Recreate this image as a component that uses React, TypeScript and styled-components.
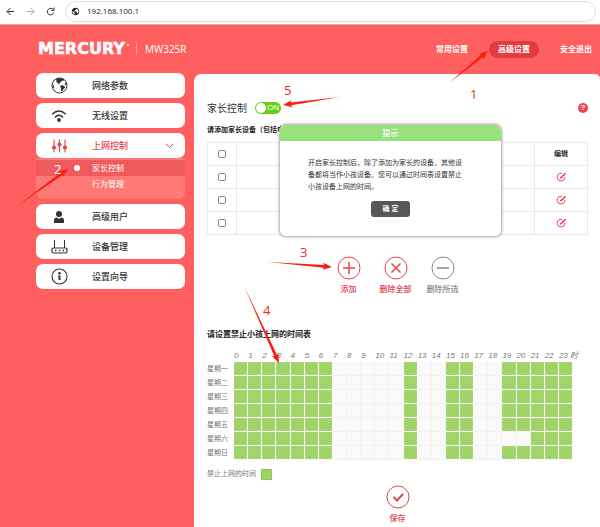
import React, { useState } from "react";
import styled, { createGlobalStyle } from "styled-components";
import { MdPublic } from "react-icons/md";

const RED = "#ff605f";
const ACCENT = "#e2444c";
const GREEN = "#a0d468";

const GlobalStyle = createGlobalStyle`
  * { box-sizing: border-box; }
  body {
    margin: 0;
    background: ${RED};
    color: #333;
    font: 8px/12px "Noto Sans", "Noto Sans CJK SC", sans-serif;
  }
  button { font: inherit; color: inherit; background: none; border: 0; padding: 0; cursor: pointer; }
  a { color: inherit; text-decoration: none; }
  h1, h2, p, ul { margin: 0; padding: 0; font-weight: 400; }
  ul { list-style: none; }
  svg { display: block; flex: none; }
`;

const Page = styled.div`
  position: relative;
  min-height: 100vh;
  overflow: hidden;
  display: flex;
  flex-direction: column;
`;

const BrowserBar = styled.div`
  display: flex;
  align-items: center;
  height: 25px;
  padding: 1px 4px 3px 0;
  background: #fff;
  border-bottom: 1px solid #e2a9a9;
`;

const BrowserButton = styled.button<{ $dim?: boolean }>`
  width: 20px;
  display: flex;
  justify-content: center;
  && { color: ${(p) => (p.$dim ? "#aaa" : "#333")}; }
`;

const AddressBox = styled.label`
  flex: 1;
  display: flex;
  align-items: center;
  gap: 7px;
  height: 21px;
  margin-left: 5px;
  padding: 0 5px;
  border: 1px solid #dcdfe2;
  border-radius: 11px;
  color: #222;
`;

const AddressInput = styled.input`
  flex: 1;
  min-width: 0;
  padding: 0;
  border: 0;
  outline: 0;
  background: none;
  color: #222;
  font: 8px/14px "Open Sans", sans-serif;
`;

const Header = styled.header`
  display: flex;
  align-items: center;
  justify-content: space-between;
  height: 48px;
  padding: 0 8px 0 38px;
  color: #fff;
`;

const Brand = styled.div`
  display: flex;
  align-items: center;
`;

const Logo = styled.span`
  font: bold 16px/20px "DejaVu Sans", sans-serif;
  -webkit-text-stroke: 0.5px #fff;
`;

const LogoDot = styled.span`
  width: 2px;
  height: 2px;
  margin: 0 7px 8px 2px;
  border-radius: 50%;
  background: #fff;
`;

const Model = styled.span`
  padding-left: 8px;
  border-left: 1px solid #ffa09f;
  font: 10px/12px "Open Sans", sans-serif;
`;

const TopNav = styled.nav`
  display: flex;
  align-items: center;
  gap: 21px;
`;

const TopLink = styled.a<{ $active?: boolean }>`
  padding: 2px ${(p) => (p.$active ? "9px" : "0")} 3px;
  border-radius: 9px;
  background: ${(p) => (p.$active ? "#e23c40" : "none")};
  font-weight: 700;
`;

const Body = styled.div`
  flex: 1;
  display: flex;
  align-items: stretch;
  gap: 9px;
  padding-left: 36px;
`;

const Sidebar = styled.nav`
  width: 149px;
  flex: none;
  display: flex;
  flex-direction: column;
  gap: 5px;
`;

const MenuButton = styled.button<{ $active?: boolean }>`
  display: grid;
  grid-template-columns: 46px 1fr 32px;
  align-items: center;
  justify-items: start;
  width: 100%;
  height: 25px;
  border-radius: 7px;
  && {
    background: #fff;
    color: ${(p) => (p.$active ? ACCENT : "#333")};
  }
  font-size: 9px;
  line-height: 12px;
  font-weight: 500;
  svg { justify-self: center; }
`;

const MenuLabel = styled.span`
  padding-left: 10px;
`;

const SubMenu = styled.ul`
  padding: 2px 0 7px;
  border-radius: 0 0 7px 7px;
  background: #ff7977;
  color: #fff;
`;

const SubLink = styled.a<{ $active?: boolean }>`
  display: grid;
  grid-template-columns: 56px 1fr;
  align-items: center;
  height: 16px;
  background: ${(p) => (p.$active ? "#ef5b5c" : "none")};
  &::before {
    content: "";
    justify-self: end;
    width: 6px;
    height: 6px;
    margin-right: 12px;
    border-radius: 50%;
    background: ${(p) => (p.$active ? "#fff" : "none")};
  }
`;

const Panel = styled.main`
  flex: 1;
  min-width: 0;
  margin-top: 1px;
  padding: 26px 12px 0 13px;
  border-radius: 7px 5px 0 0;
  background: #fff;
`;

const TitleRow = styled.div`
  display: flex;
  align-items: center;
  gap: 8px;
  height: 16px;
`;

const Title = styled.h1`
  font-size: 10px;
  line-height: 16px;
`;

const Switch = styled.label`
  display: flex;
  align-items: center;
  gap: 1px;
  width: 26px;
  height: 12px;
  padding: 1px;
  border-radius: 6px;
  background: #67cf18;
  color: #fff;
  font: 8px/10px "Liberation Sans", sans-serif;
  &:has(input:not(:checked)) { background: #bbb; }
`;

const SwitchInput = styled.input`
  appearance: none;
  flex: none;
  width: 10px;
  height: 10px;
  margin: 0;
  border-radius: 50%;
  background: #fff;
`;

const HelpButton = styled.button`
  width: 10px;
  height: 10px;
  margin-left: auto;
  border-radius: 50%;
  && {
    background: #ee4350;
    color: #fff;
    font: bold 8px/10px "Liberation Sans", sans-serif;
  }
`;

const TableArea = styled.div`
  position: relative;
  padding-top: 8px;
`;

const Hint = styled.p`
  height: 18px;
  color: #222;
  font-size: 7px;
  line-height: 11px;
  font-weight: 700;
  white-space: nowrap;
  overflow: hidden;
`;

const DeviceTable = styled.table`
  width: 100%;
  table-layout: fixed;
  border-collapse: collapse;
  th, td {
    height: 23px;
    padding: 0;
    border: 1px solid #e9e9e9;
    border-width: 1px 0;
    text-align: center;
    vertical-align: middle;
    font-size: 7px;
  }
  th:first-child, td:first-child { width: 29px; border-width: 1px; }
  th:last-child, td:last-child { width: 53px; border-width: 1px; }
`;

const Tick = styled.input`
  appearance: none;
  display: block;
  width: 8px;
  height: 8px;
  margin: 0 auto;
  border: 1px solid #888;
  border-radius: 2px;
  background: #fff;
  &:checked { background: ${ACCENT}; }
`;

const EditButton = styled.button`
  display: block;
  && { margin: 0 auto; color: ${ACCENT}; }
`;

const Dialog = styled.section`
  position: absolute;
  top: 8px;
  left: 72px;
  right: 86px;
  padding-bottom: 19px;
  border: 1px solid #c4c4c4;
  border-radius: 7px;
  background: #fff;
  box-shadow: 0 0 3px rgba(0, 0, 0, 0.35);
  text-align: center;
  overflow: hidden;
`;

const DialogTitle = styled.h2`
  background: #98e27d;
  color: #fff;
  font-size: 8px;
  line-height: 16px;
  font-weight: 500;
`;

const DialogText = styled.p`
  padding: 16px 28px 8px;
  color: #333;
  font-size: 7px;
  line-height: 12px;
  text-align: left;
  white-space: nowrap;
`;

const DialogButton = styled.button`
  height: 16px;
  border-radius: 3px;
  && { background: #575757; color: #fff; font-size: 7px; line-height: 12px; font-weight: 700; padding: 0 12px; }
`;

const Actions = styled.div<{ $top: number; $right?: number }>`
  display: flex;
  justify-content: center;
  padding: ${(p) => p.$top}px ${(p) => p.$right ?? 0}px 0 0;
`;

const ActionButton = styled.button<{ $muted?: boolean }>`
  display: flex;
  flex-direction: column;
  align-items: center;
  gap: 3px;
  width: 47px;
  && { color: ${(p) => (p.$muted ? "#888" : ACCENT)}; }
  font-weight: 500;
`;

const SectionTitle = styled.h2`
  padding-top: 33px;
  color: #222;
  font-size: 8px;
  line-height: 12px;
  font-weight: 700;
`;

const Schedule = styled.table`
  width: 366px;
  max-width: 100%;
  margin-top: 9px;
  table-layout: fixed;
  border-collapse: separate;
  border-spacing: 0;
  color: #777;
  th, td { padding: 0; font-weight: 400; text-align: left; white-space: nowrap; }
  th { font-size: 7px; line-height: 12px; }
  thead th { height: 13px; font-style: italic; font-size: 8px; line-height: 12px; font-family: "Liberation Sans", "Noto Sans CJK SC", sans-serif; }
  tr > :first-child { width: 27px; }
`;

const HourCell = styled.button<{ $blocked: boolean }>`
  display: block;
  width: 100%;
  height: 14px;
  && {
    border: solid ${(p) => (p.$blocked ? "#fafdf7" : "#f2f2f2")};
    border-width: 0 1px 1px 0;
    background: ${(p) => (p.$blocked ? GREEN : "#fafafa")};
    box-shadow: ${(p) => (p.$blocked ? "inset 0 0 0 1px #a6d673" : "none")};
  }
`;

const Legend = styled.div`
  display: flex;
  align-items: center;
  gap: 5px;
  padding-top: 8px;
  color: #777;
  font-size: 7px;
`;

const Swatch = styled.span`
  width: 11px;
  height: 11px;
  border: 1px solid #91c65b;
  background: ${GREEN};
`;

const Annotations = styled.svg`
  position: absolute;
  top: 0;
  left: 0;
  pointer-events: none;
  font: 13px "Open Sans", sans-serif;
`;

const GlobeIcon = () => (
  <svg width="17" height="17" viewBox="0 0 17 17" fill="currentColor">
    <circle cx="8.5" cy="8.5" r="7.5" fill="none" stroke="currentColor" />
    <path d="M5 2 8 1.200h3.500l2 1.500-1.300 1.200-1.500-.3-.5 1.500-1.700.8-.4 1.500-1.300-.9-.3-1.300-1.300.3.300-1.500z" />
    <path d="M9.400 8.800l1.800-.8 2.300 1.200.6 1.500-1.600 1.300-.8 1.800-1.200 1-.7-1.800.4-1.700-1-1.200zM14.300 5.200l1.200 1.600-.4 2-1.300-1.500zM1.200 7l1.600 1.500.4 2-.8.9z" />
  </svg>
);

const WifiIcon = () => (
  <svg width="16" height="14" viewBox="0 0 16 14" fill="none" stroke="currentColor" strokeWidth="1.500">
    <path d="M1.200 5.200Q8-1.200 14.800 5.200M4 8.400Q8 4.200 12 8.400" />
    <circle cx="8" cy="11" r="1.900" fill="currentColor" stroke="none" />
  </svg>
);

const SlidersIcon = () => (
  <svg width="15" height="14" viewBox="0 0 15 14" fill="currentColor" stroke="currentColor" strokeWidth="1.100">
    <path d="M2 .500v13M7.500.500v13M13 .500v13" fill="none" />
    <circle cx="2" cy="8.500" r="1.500" /><circle cx="7.500" cy="5.500" r="1.500" /><circle cx="13" cy="8.500" r="1.500" />
  </svg>
);

const UserIcon = () => (
  <svg width="12" height="14" viewBox="0 0 12 14" fill="currentColor">
    <circle cx="6" cy="4" r="3" />
    <path d="M1 13V10.500Q1 8 3.800 7.600L6 9l2.200-1.400Q11 8 11 10.500V13z" />
  </svg>
);

const RouterIcon = () => (
  <svg width="17" height="16" viewBox="0 0 17 16" fill="none" stroke="currentColor">
    <rect x="1" y="9" width="15" height="5" rx="1.500" strokeWidth="1.200" />
    <path d="M3.500 9V1M13.500 9V1" />
    <path d="M4 11.500h1.500M7.800 11.500h1.500M11.500 11.500H13" strokeWidth="1.500" />
  </svg>
);

const InfoIcon = () => (
  <svg width="17" height="17" viewBox="0 0 17 17" fill="currentColor">
    <circle cx="8.500" cy="8.500" r="7.500" fill="none" stroke="currentColor" strokeWidth="1.100" />
    <circle cx="8.500" cy="5.200" r="1.300" />
    <path d="M7 7.500h2.500V12H7.500V8.500H7z" />
  </svg>
);

const ChevronIcon = () => (
  <svg width="9" height="6" viewBox="0 0 9 6" fill="none" stroke="currentColor">
    <path d="M1 1l3.500 3.500L8 1" />
  </svg>
);

const EditIcon = () => (
  <svg width="11" height="10" viewBox="0 0 11 10" fill="none" stroke="currentColor">
    <path d="M6 1.400H4.400A3.800 3.800 0 1 0 8.800 5" />
    <path d="M4.300 6.400L9.600 1.200" strokeWidth="1.500" />
  </svg>
);

const CircleIcon = ({ d, width = 1.5 }: { d: string; width?: number }) => (
  <svg width="24" height="24" viewBox="0 0 24 24" fill="none" stroke="currentColor">
    <circle cx="12" cy="12" r="11" />
    <path d={d} strokeWidth={width} />
  </svg>
);

const NavArrow = ({ d }: { d: string }) => (
  <svg width="9" height="9" viewBox="0 0 9 9" fill="none" stroke="currentColor">
    <path d={d} />
  </svg>
);

type Point = [number, number];

/** A tapered stroke that grows from its tail into a solid arrow head. */
const Arrow = ({ from, to }: { from: Point; to: Point }) => {
  const dx = to[0] - from[0];
  const dy = to[1] - from[1];
  const len = Math.hypot(dx, dy);
  const angle = (Math.atan2(dy, dx) * 180) / Math.PI;
  const neck = len - 8;
  return (
    <path
      fill="#fb1d10"
      transform={`translate(${from[0]} ${from[1]}) rotate(${angle})`}
      d={`M0 0L${neck} -1.500L${neck - 1} -3.500L${len} 0L${neck - 1} 3.500L${neck} 1.500z`}
    />
  );
};

const arrows: { from: Point; to: Point }[] = [
  { from: [449, 83], to: [488, 51] },
  { from: [16, 207], to: [68, 169] },
  { from: [268, 262], to: [332, 267] },
  { from: [244, 286], to: [279, 363] },
  { from: [340, 97], to: [283, 105] },
];

const marks = [
  { n: "1", x: 470, y: 99, fill: "#f02a20" },
  { n: "2", x: 54, y: 174, fill: "#fff" },
  { n: "3", x: 300, y: 257, fill: "#f02a20" },
  { n: "4", x: 263, y: 315, fill: "#f02a20" },
  { n: "5", x: 284, y: 95, fill: "#f02a20" },
];

const hours = Array.from({ length: 24 }, (_, h) => h);
const days = ["一", "二", "三", "四", "五", "六", "日"];
const isBlocked = (day: string, h: number) =>
  h < 7 || h === 12 || h === 15 || h === 16 || h >= (day === "六" ? 21 : 19);

const upperMenu = [
  { label: "网络参数", icon: <GlobeIcon /> },
  { label: "无线设置", icon: <WifiIcon /> },
];
const lowerMenu = [
  { label: "高级用户", icon: <UserIcon /> },
  { label: "设备管理", icon: <RouterIcon /> },
  { label: "设置向导", icon: <InfoIcon /> },
];

type MenuEntry = { label: string; icon: React.ReactNode };
const MenuItem = ({ label, icon }: MenuEntry) => (
  <MenuButton>
    {icon}
    <MenuLabel>{label}</MenuLabel>
  </MenuButton>
);

export default function App() {
  const [blocked, setBlocked] = useState(() => days.map((d) => hours.map((h) => isBlocked(d, h))));
  const toggle = (row: number, col: number) =>
    setBlocked((all) => all.map((r, i) => (i === row ? r.map((v, j) => (j === col ? !v : v)) : r)));

  return (
    <Page>
      <GlobalStyle />
      <BrowserBar>
        <BrowserButton aria-label="后退"><NavArrow d="M8 4.500H1M4.500 1L1 4.500 4.500 8" /></BrowserButton>
        <BrowserButton aria-label="前进" $dim><NavArrow d="M1 4.500h7M4.500 1L8 4.500 4.500 8" /></BrowserButton>
        <BrowserButton aria-label="刷新"><NavArrow d="M7.500 3A3.300 3.300 0 1 0 7.800 5.500M8 .500V3.300H5.200" /></BrowserButton>
        <AddressBox>
          <MdPublic size={9} />
          <AddressInput aria-label="地址" defaultValue="192.168.100.1" />
        </AddressBox>
      </BrowserBar>

      <Header>
        <Brand>
          <Logo>MERCURY</Logo>
          <LogoDot />
          <Model>MW325R</Model>
        </Brand>
        <TopNav>
          <TopLink href="#basic">常用设置</TopLink>
          <TopLink href="#advanced" $active>高级设置</TopLink>
          <TopLink href="#logout">安全退出</TopLink>
        </TopNav>
      </Header>

      <Body>
        <Sidebar>
          {upperMenu.map((m) => <MenuItem key={m.label} {...m} />)}
          <div>
            <MenuButton $active>
              <SlidersIcon />
              <MenuLabel>上网控制</MenuLabel>
              <ChevronIcon />
            </MenuButton>
            <SubMenu>
              <li><SubLink href="#parent" $active>家长控制</SubLink></li>
              <li><SubLink href="#behavior">行为管理</SubLink></li>
            </SubMenu>
          </div>
          {lowerMenu.map((m) => <MenuItem key={m.label} {...m} />)}
        </Sidebar>

        <Panel>
          <TitleRow>
            <Title>家长控制</Title>
            <Switch>
              <SwitchInput type="checkbox" role="switch" defaultChecked />
              ON
            </Switch>
            <HelpButton aria-label="帮助">?</HelpButton>
          </TitleRow>

          <TableArea>
            <Hint>请添加家长设备（包括电脑、手机等）</Hint>
            <DeviceTable>
              <thead>
                <tr>
                  <th><Tick type="checkbox" aria-label="全选" /></th>
                  <th />
                  <th>编辑</th>
                </tr>
              </thead>
              <tbody>
                {[1, 2, 3].map((n) => (
                  <tr key={n}>
                    <td><Tick type="checkbox" aria-label={`选择设备 ${n}`} /></td>
                    <td />
                    <td><EditButton aria-label={`编辑设备 ${n}`}><EditIcon /></EditButton></td>
                  </tr>
                ))}
              </tbody>
            </DeviceTable>
            <Dialog role="dialog" aria-labelledby="tip-title">
              <DialogTitle id="tip-title">提示</DialogTitle>
              <DialogText>
                开启家长控制后，除了添加为家长的设备，其他设<br />
                备都将当作小孩设备。您可以通过时间表设置禁止<br />
                小孩设备上网的时间。
              </DialogText>
              <DialogButton>确 定</DialogButton>
            </Dialog>
          </TableArea>

          <Actions $top={21} $right={4}>
            <ActionButton><CircleIcon d="M12 6v12M6 12h12" />添加</ActionButton>
            <ActionButton><CircleIcon d="M7.500 7.500l9 9M16.500 7.500l-9 9" />删除全部</ActionButton>
            <ActionButton $muted><CircleIcon d="M6 12h12" />删除所选</ActionButton>
          </Actions>

          <SectionTitle>请设置禁止小孩上网的时间表</SectionTitle>
          <Schedule>
            <thead>
              <tr>
                <th />
                {hours.map((h) => <th key={h} scope="col">{h === 23 ? "23 时" : h}</th>)}
              </tr>
            </thead>
            <tbody>
              {days.map((d, row) => (
                <tr key={d}>
                  <th scope="row">星期{d}</th>
                  {hours.map((h) => (
                    <td key={h}>
                      <HourCell
                        $blocked={blocked[row][h]}
                        aria-label={`星期${d} ${h}时`}
                        aria-pressed={blocked[row][h]}
                        onClick={() => toggle(row, h)}
                      />
                    </td>
                  ))}
                </tr>
              ))}
            </tbody>
          </Schedule>
          <Legend>禁止上网的时间<Swatch /></Legend>

          <Actions $top={5}>
            <ActionButton><CircleIcon d="M7.500 12l3.500 3.500 6-6.500" width={2} />保存</ActionButton>
          </Actions>
        </Panel>
      </Body>

      <Annotations width="600" height="527" viewBox="0 0 600 527">
        {arrows.map((a, i) => <Arrow key={i} {...a} />)}
        {marks.map((m) => <text key={m.n} x={m.x} y={m.y} fill={m.fill}>{m.n}</text>)}
      </Annotations>
    </Page>
  );
}
